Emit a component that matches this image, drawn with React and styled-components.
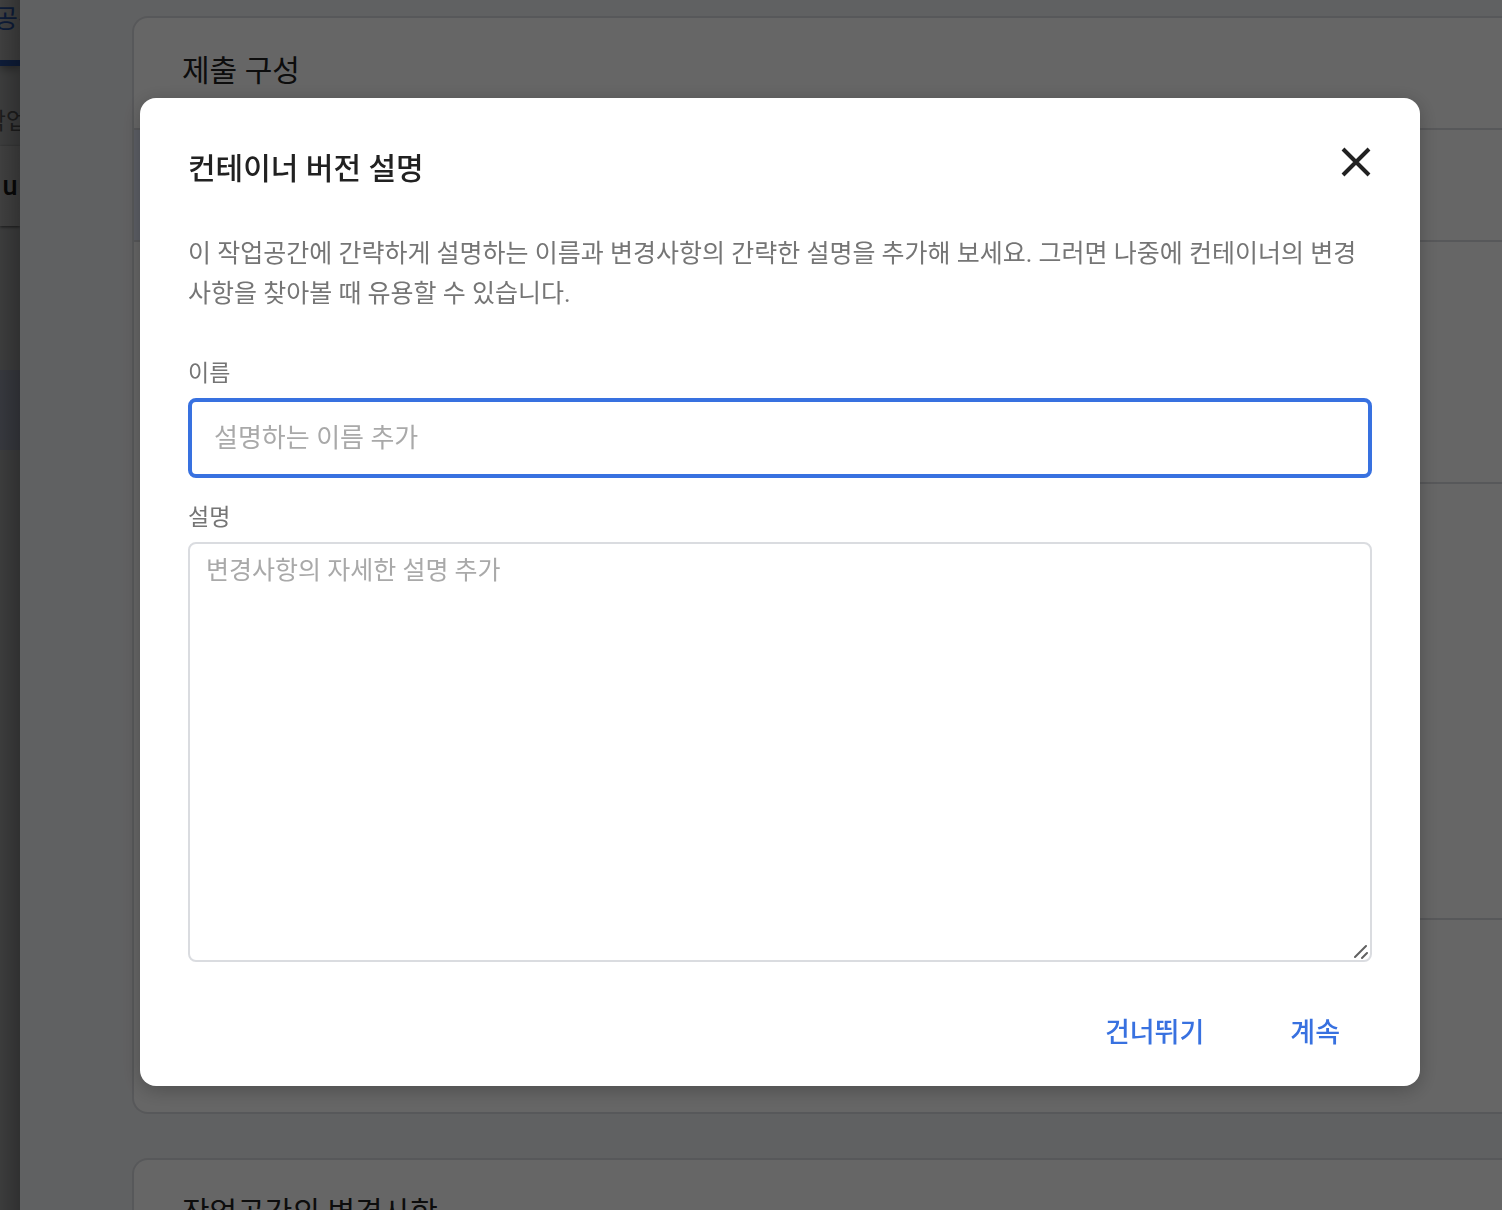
import React, { useState } from 'react';
import styled, { createGlobalStyle } from 'styled-components';

const COLORS = {
  BLUE: '#3871e0',
  LIGHT_BLUE: '#e6ebfc',
  BORDER: '#dadce0',
  PAGE: '#f1f3f4',
  TEXT: '#212121',
  GREY: '#757575',
  PLACEHOLDER: '#a9a9a9',
};

const GlobalStyle = createGlobalStyle`
  * {
    box-sizing: border-box;
  }

  body {
    background: ${COLORS.PAGE};
    color: ${COLORS.TEXT};
    font-family: Roboto, 'Noto Sans CJK KR', sans-serif;
    margin: 0;
    overflow: hidden;
  }

  button, input, textarea {
    font-family: inherit;
  }
`;

const Screen = styled.div`
  display: flex;
  height: 100vh;
  overflow: hidden;
`;

const Workspace = styled.aside`
  background: ${COLORS.PAGE};
  display: flex;
  flex-direction: column;
  flex: 0 0 20px;
  overflow: hidden;
  position: relative;
  white-space: nowrap;

  &::after {
    background: linear-gradient(to right, rgba(0, 0, 0, 0.38), rgba(0, 0, 0, 0.5));
    content: '';
    inset: 0;
    position: absolute;
    z-index: 2;
  }
`;

const Tab = styled.div`
  background: #fff;
  border-bottom: 6px solid ${COLORS.BLUE};
  box-shadow: 0 2px 10px rgba(0, 0, 0, 0.4);
  color: ${COLORS.BLUE};
  display: flex;
  flex: 0 0 66px;
  font-size: 26px;
  justify-content: center;
  line-height: 38px;
  padding-left: 16px;
  z-index: 1;
`;

const SideLabel = styled.div`
  color: ${COLORS.GREY};
  display: flex;
  flex: 0 0 80px;
  font-size: 23px;
  justify-content: center;
  line-height: 32px;
  padding: 40px 8px 0 0;
`;

const SideCard = styled.div`
  background: #fff;
  box-shadow: 0 1px 3px rgba(0, 0, 0, 0.6);
  display: flex;
  flex: 0 0 80px;
  font-size: 27px;
  font-weight: 500;
  justify-content: center;
  line-height: 80px;
  z-index: 1;
`;

const SideNav = styled.div`
  background: ${({ $active }) => ($active ? '#dae1f8' : COLORS.PAGE)};
  flex: 0 0 ${({ $active }) => ($active ? 80 : 144)}px;
`;

const Sheet = styled.main`
  background: ${COLORS.PAGE};
  display: flex;
  flex: 1;
  flex-direction: column;
  gap: 44px;
  padding: 16px 0 0 112px;
`;

const Card = styled.section`
  background: #fff;
  border: 2px solid ${COLORS.BORDER};
  border-radius: 16px 0 0 16px;
  border-right: 0;
  flex-shrink: 0;
  overflow: hidden;
`;

const CardTitle = styled.h2`
  font-size: 30px;
  font-weight: 400;
  line-height: 46px;
  margin: 0;
  padding: 30px 48px 34px;
`;

const CardRow = styled.div`
  border-top: 2px solid ${COLORS.BORDER};
  display: flex;
  height: ${({ $height }) => $height}px;
  margin-left: ${({ $inset }) => ($inset ? '50%' : 0)};
`;

const SelectedCell = styled.div`
  background: ${COLORS.LIGHT_BLUE};
  flex: 0 0 50%;
`;

const Backdrop = styled.div`
  background: rgba(0, 0, 0, 0.6);
  display: flex;
  align-items: flex-start;
  inset: 0;
  padding: 98px 82px 0 140px;
  position: fixed;
  z-index: 10;
`;

const Dialog = styled.form`
  background: #fff;
  border-radius: 16px;
  box-shadow: 0 4px 20px rgba(0, 0, 0, 0.25);
  display: flex;
  flex: 1;
  flex-direction: column;
  padding: 48px 48px 16px;
`;

const DialogHeader = styled.header`
  align-items: flex-start;
  display: flex;
  justify-content: space-between;
`;

const DialogTitle = styled.h1`
  font-size: 30px;
  font-weight: 500;
  line-height: 46px;
  margin: 0;
`;

const CloseButton = styled.button`
  background: none;
  border: 0;
  color: ${COLORS.TEXT};
  cursor: pointer;
  display: flex;
  padding: 0;
`;

const Description = styled.p`
  color: ${COLORS.GREY};
  font-size: 25px;
  line-height: 40px;
  margin: 42px 0 44px;
  word-break: break-all;
`;

const Label = styled.label`
  color: ${COLORS.GREY};
  font-size: 23px;
  line-height: 32px;
  margin-bottom: 8px;
`;

const NameInput = styled.input`
  border: 2px solid ${COLORS.BORDER};
  border-radius: 8px;
  font-size: 26px;
  height: 80px;
  margin-bottom: 24px;
  outline: none;
  padding: 0 24px;

  &:focus {
    border: 4px solid ${COLORS.BLUE};
    padding: 0 22px;
  }

  &::placeholder {
    color: ${COLORS.PLACEHOLDER};
  }
`;

const NotesWrapper = styled.div`
  display: flex;
  position: relative;
`;

const Notes = styled.textarea`
  border: 2px solid ${COLORS.BORDER};
  border-radius: 8px;
  flex: 1;
  font-size: 25px;
  height: 420px;
  line-height: 36px;
  outline: none;
  padding: 9px 16px;
  resize: none;

  &::placeholder {
    color: ${COLORS.PLACEHOLDER};
  }
`;

const Grip = styled.svg`
  bottom: 2px;
  pointer-events: none;
  position: absolute;
  right: 2px;
`;

const Actions = styled.footer`
  display: flex;
  gap: 22px;
  justify-content: flex-end;
  margin-top: 36px;
`;

const ActionButton = styled.button`
  background: none;
  border: 0;
  color: ${COLORS.BLUE};
  cursor: pointer;
  font-size: 27px;
  font-weight: 500;
  line-height: 38px;
  padding: 16px 32px 18px;
`;

const App = () => {
  const [name, setName] = useState('');
  const [notes, setNotes] = useState('');

  return (
    <>
      <GlobalStyle />
      <Screen>
        <Workspace>
          <Tab>공간</Tab>
          <SideLabel>작업</SideLabel>
          <SideCard>u</SideCard>
          <SideNav />
          <SideNav $active />
        </Workspace>
        <Sheet>
          <Card>
            <CardTitle>제출 구성</CardTitle>
            <CardRow $height={112}>
              <SelectedCell />
            </CardRow>
            <CardRow $height={242} />
            <CardRow $inset $height={436} />
            <CardRow $inset $height={194} />
          </Card>
          <Card>
            <CardTitle>작업공간의 변경사항</CardTitle>
          </Card>
        </Sheet>
      </Screen>

      <Backdrop>
        <Dialog
          role="dialog"
          aria-modal="true"
          aria-labelledby="dialog-title"
          onSubmit={e => e.preventDefault()}
        >
          <DialogHeader>
            <DialogTitle id="dialog-title">컨테이너 버전 설명</DialogTitle>
            <CloseButton type="button" aria-label="닫기">
              <svg width="32" height="32" viewBox="0 0 32 32" fill="none" stroke="currentColor" strokeWidth="4">
                <path d="M3 3L29 29M29 3L3 29" />
              </svg>
            </CloseButton>
          </DialogHeader>
          <Description>
            이 작업공간에 간략하게 설명하는 이름과 변경사항의 간략한 설명을 추가해 보세요. 그러면 나중에 컨테이너의 변경사항을 찾아볼 때 유용할 수 있습니다.
          </Description>
          <Label htmlFor="version-name">이름</Label>
          <NameInput
            id="version-name"
            autoFocus
            placeholder="설명하는 이름 추가"
            value={name}
            onChange={e => setName(e.target.value)}
          />
          <Label htmlFor="version-notes">설명</Label>
          <NotesWrapper>
            <Notes
              id="version-notes"
              placeholder="변경사항의 자세한 설명 추가"
              value={notes}
              onChange={e => setNotes(e.target.value)}
            />
            <Grip width="16" height="16" viewBox="0 0 16 16" stroke="#616161" strokeWidth="2" strokeLinecap="round">
              <path d="M1 13L12 2M8 14L13 9" />
            </Grip>
          </NotesWrapper>
          <Actions>
            <ActionButton type="button">건너뛰기</ActionButton>
            <ActionButton type="submit">계속</ActionButton>
          </Actions>
        </Dialog>
      </Backdrop>
    </>
  );
};

export default App;
